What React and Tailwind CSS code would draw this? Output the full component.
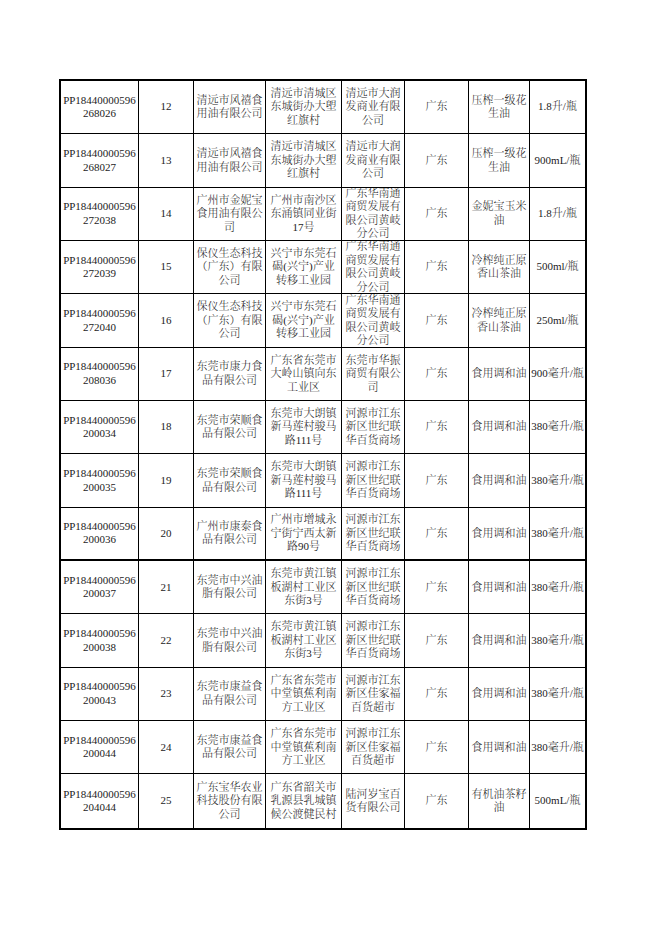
const ROWS = [
  ['PP18440000596268026', '12', '清远市风禧食用油有限公司', '清远市清城区东城街办大塱红旗村', '清远市大润发商业有限公司', '广东', '压榨一级花生油', '1.8升/瓶'],
  ['PP18440000596268027', '13', '清远市风禧食用油有限公司', '清远市清城区东城街办大塱红旗村', '清远市大润发商业有限公司', '广东', '压榨一级花生油', '900mL/瓶'],
  ['PP18440000596272038', '14', '广州市金妮宝食用油有限公司', '广州市南沙区东涌镇同业街17号', '广东华南通商贸发展有限公司黄岐分公司', '广东', '金妮宝玉米油', '1.8升/瓶'],
  ['PP18440000596272039', '15', '保仪生态科技（广东）有限公司', '兴宁市东莞石碣(兴宁)产业转移工业园', '广东华南通商贸发展有限公司黄岐分公司', '广东', '冷榨纯正原香山茶油', '500ml/瓶'],
  ['PP18440000596272040', '16', '保仪生态科技（广东）有限公司', '兴宁市东莞石碣(兴宁)产业转移工业园', '广东华南通商贸发展有限公司黄岐分公司', '广东', '冷榨纯正原香山茶油', '250ml/瓶'],
  ['PP18440000596208036', '17', '东莞市康力食品有限公司', '广东省东莞市大岭山镇向东工业区', '东莞市华振商贸有限公司', '广东', '食用调和油', '900毫升/瓶'],
  ['PP18440000596200034', '18', '东莞市荣顺食品有限公司', '东莞市大朗镇新马莲村骏马路111号', '河源市江东新区世纪联华百货商场', '广东', '食用调和油', '380毫升/瓶'],
  ['PP18440000596200035', '19', '东莞市荣顺食品有限公司', '东莞市大朗镇新马莲村骏马路111号', '河源市江东新区世纪联华百货商场', '广东', '食用调和油', '380毫升/瓶'],
  ['PP18440000596200036', '20', '广州市康泰食品有限公司', '广州市增城永宁街宁西太新路90号', '河源市江东新区世纪联华百货商场', '广东', '食用调和油', '380毫升/瓶'],
  ['PP18440000596200037', '21', '东莞市中兴油脂有限公司', '东莞市黄江镇板湖村工业区东街3号', '河源市江东新区世纪联华百货商场', '广东', '食用调和油', '380毫升/瓶'],
  ['PP18440000596200038', '22', '东莞市中兴油脂有限公司', '东莞市黄江镇板湖村工业区东街3号', '河源市江东新区世纪联华百货商场', '广东', '食用调和油', '380毫升/瓶'],
  ['PP18440000596200043', '23', '东莞市康益食品有限公司', '广东省东莞市中堂镇蕉利南方工业区', '河源市江东新区佳家福百货超市', '广东', '食用调和油', '380毫升/瓶'],
  ['PP18440000596200044', '24', '东莞市康益食品有限公司', '广东省东莞市中堂镇蕉利南方工业区', '河源市江东新区佳家福百货超市', '广东', '食用调和油', '380毫升/瓶'],
  ['PP18440000596204044', '25', '广东宝华农业科技股份有限公司', '广东省韶关市乳源县乳城镇候公渡健民村', '陆河岁宝百货有限公司', '广东', '有机油茶籽油', '500mL/瓶'],
];

// column widths incl. right border line
const COLS = ['w-[78px]', 'w-[55px]', 'w-[72px]', 'w-[76px]', 'w-[63px]', 'w-[64px]', 'w-[61px]', 'w-[55px]'];

function Cell({ text, idx }) {
  const last = idx === COLS.length - 1;
  return (
    <div
      className={`${COLS[idx]} shrink-0 h-full flex items-center justify-center overflow-hidden px-[2px] ${last ? '' : 'border-r border-black'}`}
    >
      <div className={`text-center leading-[13.5px] ${idx === 0 ? 'break-all' : ''} ${last ? 'whitespace-nowrap' : ''}`}>
        {text}
      </div>
    </div>
  );
}

export default function App() {
  return (
    <div
      lang="zh-CN"
      className="min-h-[936px] w-[662px] bg-white pt-[79px] pl-[59px] text-[11px] font-light text-[#1c1c1c]"
      style={{ fontFamily: '"Liberation Serif", "Noto Serif CJK SC", "Noto Sans CJK SC", serif' }}
    >
      <div className="w-[528px] border-2 border-black">
        {ROWS.map((row, r) => (
          <div
            key={row[0]}
            className={`flex h-[53.35px] ${r === ROWS.length - 1 ? '' : r === 8 ? 'border-b-2 border-black' : 'border-b border-black'}`}
          >
            {row.map((t, i) => (
              <Cell key={i} text={t} idx={i} />
            ))}
          </div>
        ))}
      </div>
    </div>
  );
}
